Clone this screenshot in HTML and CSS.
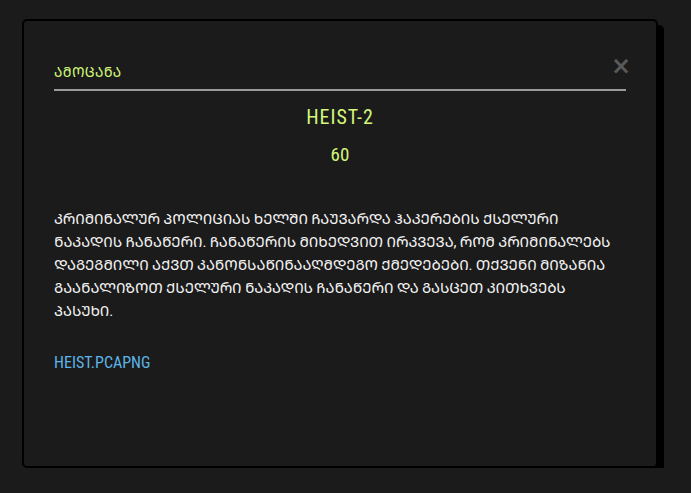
FILE: index.html
```html
<!DOCTYPE html>
<html lang="ka">
<head>
<meta charset="utf-8">
<title>ᲐᲛᲝᲪᲐᲜᲐ</title>
<link rel="stylesheet" href="styles.css">
</head>
<body>
<div class="modal">
  <div class="modal-head">
    <h2 class="modal-title">ᲐᲛᲝᲪᲐᲜᲐ</h2>
    <span class="close">×</span>
  </div>
  <h1 class="task-name">HEIST-2</h1>
  <div class="points">60</div>
  <p class="desc">ᲙᲠᲘᲛᲘᲜᲐᲚᲣᲠ ᲞᲝᲚᲘᲪᲘᲐᲡ ᲮᲔᲚᲨᲘ ᲩᲐᲣᲕᲐᲠᲓᲐ ᲰᲐᲙᲔᲠᲔᲑᲘᲡ ᲥᲡᲔᲚᲣᲠᲘ ᲜᲐᲙᲐᲓᲘᲡ ᲩᲐᲜᲐᲬᲔᲠᲘ. ᲩᲐᲜᲐᲬᲔᲠᲘᲡ ᲛᲘᲮᲔᲓᲕᲘᲗ ᲘᲠᲙᲕᲔᲕᲐ, ᲠᲝᲛ ᲙᲠᲘᲛᲘᲜᲐᲚᲔᲑᲡ ᲓᲐᲒᲔᲒᲛᲘᲚᲘ ᲐᲥᲕᲗ ᲙᲐᲜᲝᲜᲡᲐᲬᲘᲜᲐᲐᲦᲛᲓᲔᲒᲝ ᲥᲛᲔᲓᲔᲑᲔᲑᲘ. ᲗᲥᲕᲔᲜᲘ ᲛᲘᲖᲐᲜᲘᲐ ᲒᲐᲐᲜᲐᲚᲘᲖᲝᲗ ᲥᲡᲔᲚᲣᲠᲘ ᲜᲐᲙᲐᲓᲘᲡ ᲩᲐᲜᲐᲬᲔᲠᲘ ᲓᲐ ᲒᲐᲡᲪᲔᲗ ᲙᲘᲗᲮᲕᲔᲑᲡ ᲞᲐᲡᲣᲮᲘ.</p>
  <a class="file" href="#">HEIST.PCAPNG</a>
</div>
</body>
</html>
```
FILE: styles.css
```css
html, body {
  margin: 0;
  padding: 0;
  background: #1b1b1b;
}
body {
  font-family: "Roboto Condensed", "Noto Sans Georgian", sans-serif;
}
.modal {
  box-sizing: border-box;
  width: 636px;
  height: 449px;
  margin: 19px 0 0 22px;
  border: 2px solid #000;
  border-radius: 5px;
  box-shadow: 6px 6px 0 #000;
  background: #1b1b1b;
  padding: 40px 30px 30px 30px;
}
.modal-head {
  display: flex;
  justify-content: space-between;
  align-items: flex-start;
  border-bottom: 2px solid #9b9b9b;
  padding-bottom: 6px;
}
.modal-title {
  margin: 0;
  font-size: 14px;
  line-height: 22px;
  font-weight: normal;
  color: #d3f77a;
  letter-spacing: 0.3px;
}
.close {
  color: #595959;
  font-size: 24px;
  line-height: 20px;
  font-weight: bold;
  font-family: "DejaVu Sans", sans-serif;
  margin: -5px -5px 0 0;
}
.task-name {
  margin: 14px 0 0;
  text-align: center;
  font-size: 20px;
  line-height: 24px;
  font-weight: normal;
  color: #d3f77a;
  letter-spacing: 1px;
}
.points {
  margin-top: 14px;
  text-align: center;
  font-size: 19px;
  line-height: 24px;
  color: #d3f77a;
}
.desc {
  margin: 41px 0 0;
  font-size: 15px;
  line-height: 23px;
  color: #f2f2f2;
  letter-spacing: -0.1px;
}
.file {
  display: block;
  margin-top: 30px;
  font-size: 16px;
  line-height: 20px;
  color: #5db5ea;
  text-decoration: none;
  letter-spacing: 0;
}
```
